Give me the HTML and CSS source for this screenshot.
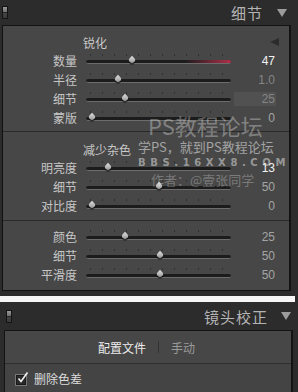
FILE: index.html
```html
<!DOCTYPE html>
<html lang="zh">
<head>
<meta charset="utf-8">
<link rel="stylesheet" href="styles.css">
</head>
<body>
<div class="hdr">
  <span class="toggle"></span>
  <span class="hdr-title">细节</span>
  <span class="tri-down"></span>
</div>
<div class="panel">
  <section class="sec sec-a">
    <div class="sec-title"><span>锐化</span><span class="tri-left"></span></div>
    <div class="row"><span class="lbl">数量</span><div class="track"><span class="red"></span><i class="thumb" style="left:32%"></i></div><span class="val hi">47</span></div>
    <div class="row"><span class="lbl">半径</span><div class="track"><i class="thumb" style="left:22%"></i></div><span class="val dim">1.0</span></div>
    <div class="row"><span class="lbl">细节</span><div class="track"><i class="thumb" style="left:27%"></i></div><span class="val dim box">25</span></div>
    <div class="row"><span class="lbl">蒙版</span><div class="track"><i class="thumb" style="left:4%"></i></div><span class="val">0</span></div>
  </section>
  <section class="sec sec-b">
    <div class="sec-title"><span>减少杂色</span></div>
    <div class="row"><span class="lbl">明亮度</span><div class="track"><i class="thumb" style="left:15%"></i></div><span class="val hi">13</span></div>
    <div class="row"><span class="lbl">细节</span><div class="track"><i class="thumb" style="left:50%"></i></div><span class="val">50</span></div>
    <div class="row"><span class="lbl">对比度</span><div class="track"><i class="thumb" style="left:4%"></i></div><span class="val">0</span></div>
  </section>
  <section class="sec sec-c">
    <div class="row"><span class="lbl">颜色</span><div class="track"><i class="thumb" style="left:27%"></i></div><span class="val">25</span></div>
    <div class="row"><span class="lbl">细节</span><div class="track"><i class="thumb" style="left:51%"></i></div><span class="val">50</span></div>
    <div class="row"><span class="lbl">平滑度</span><div class="track"><i class="thumb" style="left:51%"></i></div><span class="val">50</span></div>
  </section>
  <div class="watermark">
    <div class="wm1">PS教程论坛</div>
    <div class="wm2">学PS，就到PS教程论坛</div>
    <div class="wm3">BBS.16XX8.COM</div>
    <div class="wm4">作者：@壹张同学</div>
  </div>
</div>
<div class="stripe"></div>
<div class="hdr hdr2">
  <span class="toggle"></span>
  <span class="hdr-title">镜头校正</span>
  <span class="tri-down"></span>
</div>
<div class="panel2">
  <div class="tabs">
    <span class="tab active">配置文件</span>
    <span class="tab-sep"></span>
    <span class="tab">手动</span>
  </div>
  <div class="check-row">
    <span class="checkbox"><svg width="14" height="14" viewBox="0 0 14 14"><path d="M2.5 7.5 L5 10.5 L11.5 1.5" fill="none" stroke="#f2f2f2" stroke-width="1.6"/></svg></span>
    <span class="check-label">删除色差</span>
  </div>
</div>
</body>
</html>
```
FILE: styles.css
```css
* { box-sizing: border-box; }
html, body { margin: 0; padding: 0; }
body {
  width: 298px;
  height: 392px;
  overflow: hidden;
  background: #2c2c2c;
  font-family: "Noto Sans CJK SC", "Noto Sans", sans-serif;
  color: #c4c4c4;
}
.hdr {
  height: 25px;
  display: flex;
  align-items: center;
  padding-left: 2px;
  padding-right: 11px;
}
.toggle {
  width: 6px;
  height: 13px;
  border: 1px solid #141414;
  background: linear-gradient(#9a9a9a, #6e6e6e 45%, #262626 50%, #444 55%, #3a3a3a);
}
.hdr-title {
  margin-left: auto;
  font-size: 15px;
  line-height: 18px;
  color: #b4b4b4;
  letter-spacing: 1px;
}
.tri-down {
  margin-left: 14px;
  width: 0;
  height: 0;
  border-left: 5px solid transparent;
  border-right: 5px solid transparent;
  border-top: 8px solid #9c9c9c;
}
.panel {
  position: relative;
  margin: 0 7px 0 2px;
  border: 1px solid #121212;
  border-right-width: 2px;
  background: #474747;
  height: 266px;
}
.sec { padding-top: 7px; }
.sec-a { height: 105px; }
.sec-b {
  border-top: 1px solid #2a2a2a;
  padding-top: 8px;
  height: 89px;
}
.sec-c {
  border-top: 1px solid #2a2a2a;
  padding-top: 6px;
}
.sec-title {
  height: 18px;
  display: flex;
  align-items: center;
  padding-left: 80px;
  font-size: 12px;
  color: #c8c8c8;
}
.tri-left {
  margin-left: auto;
  margin-right: 10px;
  width: 0;
  height: 0;
  border-top: 4px solid transparent;
  border-bottom: 4px solid transparent;
  border-right: 9px solid #2c2c2c;
}
.row {
  height: 19px;
  display: grid;
  grid-template-columns: 74px 154px 44px;
  align-items: center;
}
.lbl {
  text-align: right;
  font-size: 12px;
  line-height: 16px;
  color: #c6c6c6;
}
.track {
  position: relative;
  margin-left: 9px;
  height: 4px;
  margin-top: 2px;
  background: #1c1c1c;
  border-bottom: 1px solid #6c6c6c;
  border-radius: 2px;
}
.track::before {
  content: "";
  position: absolute;
  left: 4px;
  right: 0;
  top: -6px;
  height: 2px;
  background: repeating-linear-gradient(to right, #303030 0 1px, transparent 1px 12px);
}
.red {
  position: absolute;
  right: 0;
  top: 0;
  width: 32%;
  height: 3px;
  border-radius: 2px;
  background: linear-gradient(to right, rgba(160, 40, 60, 0), #b0304a);
}
.thumb {
  position: absolute;
  top: -3px;
  width: 6px;
  height: 6px;
  border-radius: 0 50% 50% 50%;
  transform: translateX(-50%) rotate(45deg);
  background: linear-gradient(135deg, #e0e0e0, #b4b4b4 55%, #7a7a7a);
  box-shadow: 1px 1px 1px rgba(0, 0, 0, 0.7);
}
.val {
  text-align: right;
  font-family: "Liberation Sans", Arial, sans-serif;
  font-size: 12px;
  line-height: 14px;
  color: #a4a4a4;
}
.val.hi { color: #f2f2f2; }
.val.dim { color: #858585; }
.val.box {
  background: #515151;
  margin-left: 3px;
  margin-right: -1px;
  padding-right: 1px;
}
.watermark {
  position: absolute;
  left: 135px;
  top: 87px;
  pointer-events: none;
}
.wm1 {
  margin-left: 10px;
  font-size: 22px;
  line-height: 24px;
  color: rgba(255, 255, 255, 0.33);
}
.wm2 {
  margin-top: 2px;
  font-size: 13px;
  line-height: 16px;
  color: rgba(255, 255, 255, 0.5);
  white-space: nowrap;
}
.wm3 {
  margin-top: 1px;
  font-family: "DejaVu Sans", sans-serif;
  font-weight: bold;
  font-size: 10px;
  line-height: 14px;
  letter-spacing: 4.6px;
  color: rgba(255, 255, 255, 0.45);
}
.wm4 {
  margin-top: 2px;
  margin-left: 13px;
  font-size: 13px;
  line-height: 16px;
  color: rgba(255, 255, 255, 0.28);
  white-space: nowrap;
}
.stripe {
  margin-top: 5px;
  width: 295px;
  height: 6px;
  background: #f6f6f6;
}
.hdr2 {
  height: 28px;
  padding-left: 6px;
  padding-right: 7px;
}
.hdr2 .hdr-title { margin-top: 2px; }
.hdr2 .tri-down { margin-left: 13px; }
.panel2 {
  margin: 0 5px 0 4px;
  border: 1px solid #141414;
  border-bottom: none;
  border-right-width: 2px;
  background: #474747;
  height: 70px;
}
.tabs {
  height: 33px;
  display: flex;
  align-items: center;
  padding-left: 93px;
  border-bottom: 1px solid #2e2e2e;
}
.tab {
  font-size: 12px;
  color: #9a9a9a;
}
.tab.active { color: #ececec; }
.tab-sep {
  width: 1px;
  height: 12px;
  margin: 0 12px;
  background: #333;
}
.check-row {
  height: 28px;
  display: flex;
  align-items: center;
  padding-left: 11px;
  background: #444;
}
.checkbox {
  position: relative;
  width: 10px;
  height: 10px;
  margin-top: 3px;
  border: 1px solid #1a1a1a;
  background: #2a2a2a;
  box-shadow: 0 0 0 1px #777;
}
.checkbox svg {
  position: absolute;
  left: -1px;
  top: -5px;
}
.check-label {
  margin-left: 8px;
  font-size: 12px;
  color: #dcdcdc;
}
```
